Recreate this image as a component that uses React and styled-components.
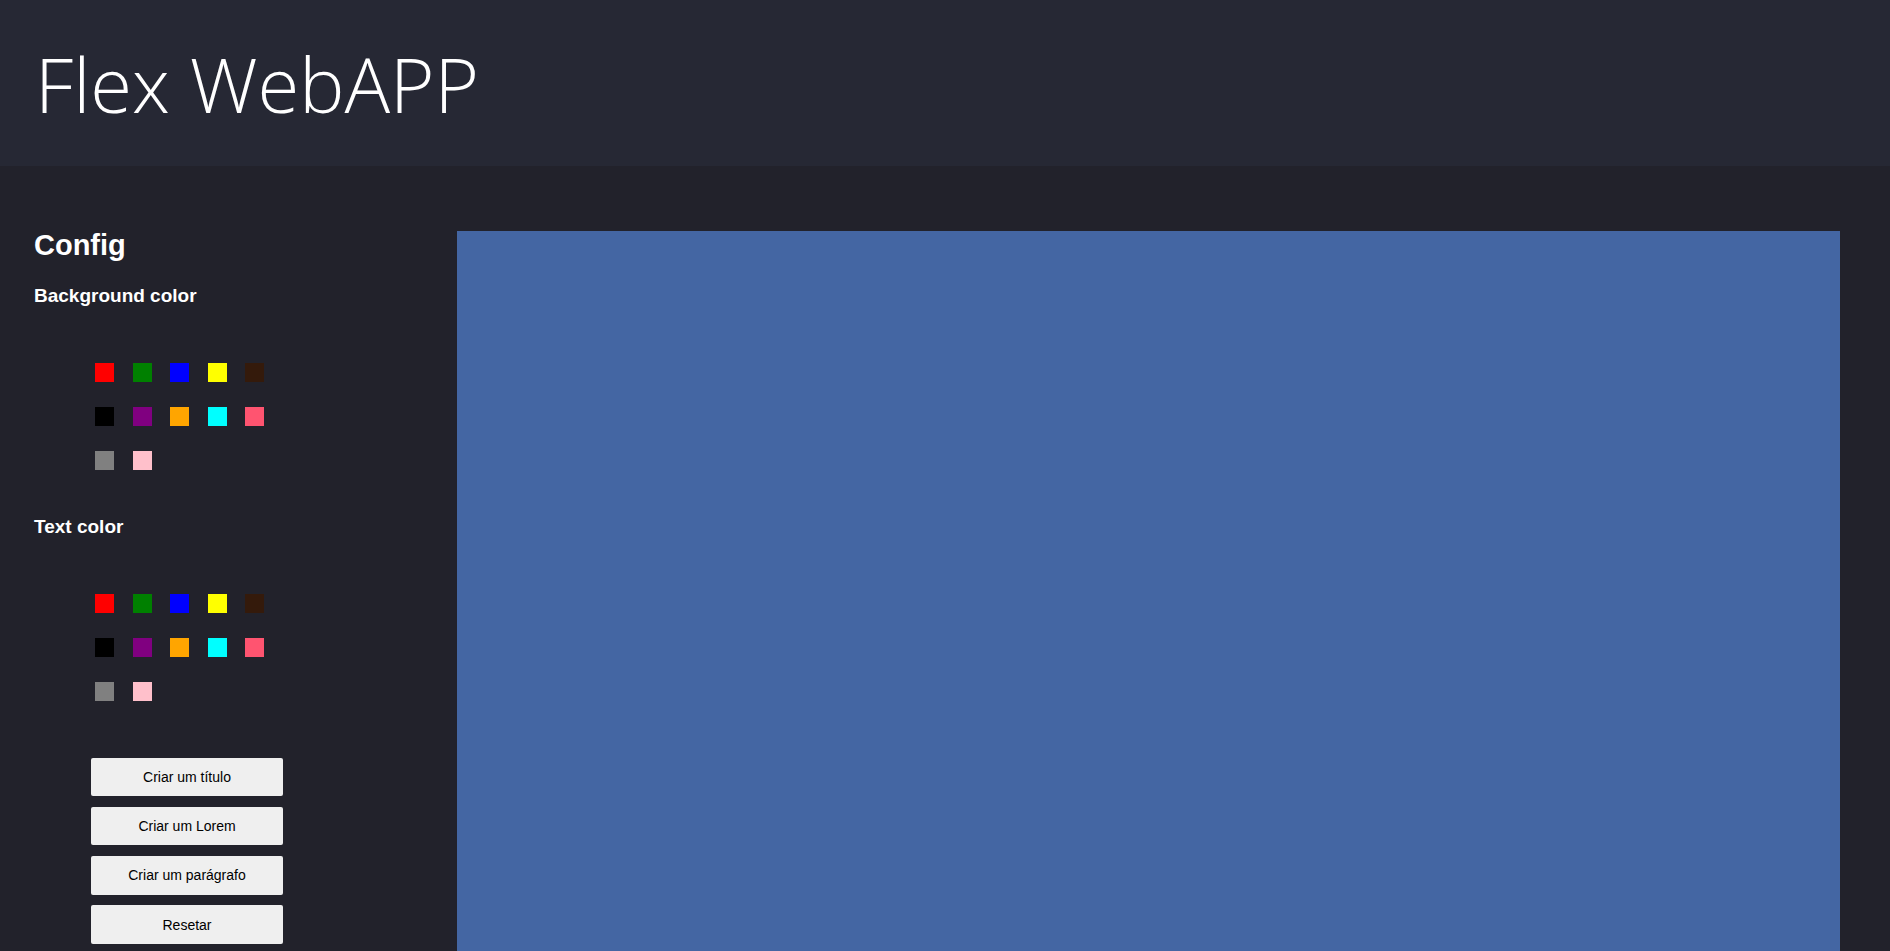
import React from "react";
import styled, { createGlobalStyle } from "styled-components";

const GlobalStyle = createGlobalStyle`
  html, body {
    margin: 0;
    padding: 0;
    background: #22222b;
    font-family: "Liberation Sans", Arial, sans-serif;
    color: #ffffff;
  }
  * { box-sizing: border-box; }
`;

const Header = styled.header`
  height: 166px;
  background: #262834;
  display: flex;
  align-items: center;
  padding-left: 35px;
`;

const Title = styled.h1`
  margin: 0;
  font-family: "Open Sans", "Noto Sans", sans-serif;
  font-weight: 300;
  font-size: 76px;
  line-height: normal;
  color: #ffffff;
`;

const Main = styled.main`
  display: flex;
  align-items: flex-start;
  padding: 0 50px 0 34px;
`;

const Sidebar = styled.aside`
  width: 423px;
  flex-shrink: 0;
  padding-top: 62px;
  display: flex;
  flex-direction: column;
`;

const SidebarTitle = styled.h2`
  margin: 0;
  font-size: 29px;
  line-height: 34px;
  font-weight: 700;
`;

const SectionTitle = styled.h3`
  margin: ${(p) => p.$top}px 0 0;
  font-size: 19px;
  line-height: 22px;
  font-weight: 700;
`;

const Palette = styled.div`
  display: grid;
  grid-template-columns: repeat(5, 19px);
  column-gap: 18.5px;
  row-gap: 25px;
  margin: 55.6px 0 0 61px;
`;

const Swatch = styled.button`
  width: 19px;
  height: 19px;
  padding: 0;
  border: none;
  background: ${(p) => p.$color};
  cursor: pointer;
`;

const Actions = styled.div`
  display: flex;
  flex-direction: column;
  gap: 10.8px;
  margin: 57px 0 0 57px;
`;

const ActionButton = styled.button`
  width: 192px;
  height: 38.5px;
  background: #efefef;
  border: none;
  border-radius: 2px;
  font-family: "Liberation Sans", Arial, sans-serif;
  font-size: 14px;
  color: #000000;
  cursor: pointer;
`;

const Canvas = styled.section`
  flex: 1;
  margin-top: 65px;
  height: 760px;
  background: #4466a3;
`;

const colors = [
  "#ff0000",
  "#008000",
  "#0000ff",
  "#ffff00",
  "#341a0b",
  "#000000",
  "#800080",
  "#ffa500",
  "#00ffff",
  "#ff5470",
  "#808080",
  "#ffc0cb",
];

const actions = ["Criar um título", "Criar um Lorem", "Criar um parágrafo", "Resetar"];

function ColorPalette() {
  return (
    <Palette>
      {colors.map((c) => (
        <Swatch key={c} $color={c} aria-label={c} />
      ))}
    </Palette>
  );
}

export default function App() {
  return (
    <>
      <GlobalStyle />
      <Header>
        <Title>Flex WebAPP</Title>
      </Header>
      <Main>
        <Sidebar>
          <SidebarTitle>Config</SidebarTitle>
          <SectionTitle $top={23.4}>Background color</SectionTitle>
          <ColorPalette />
          <SectionTitle $top={46}>Text color</SectionTitle>
          <ColorPalette />
          <Actions>
            {actions.map((a) => (
              <ActionButton key={a}>{a}</ActionButton>
            ))}
          </Actions>
        </Sidebar>
        <Canvas />
      </Main>
    </>
  );
}
